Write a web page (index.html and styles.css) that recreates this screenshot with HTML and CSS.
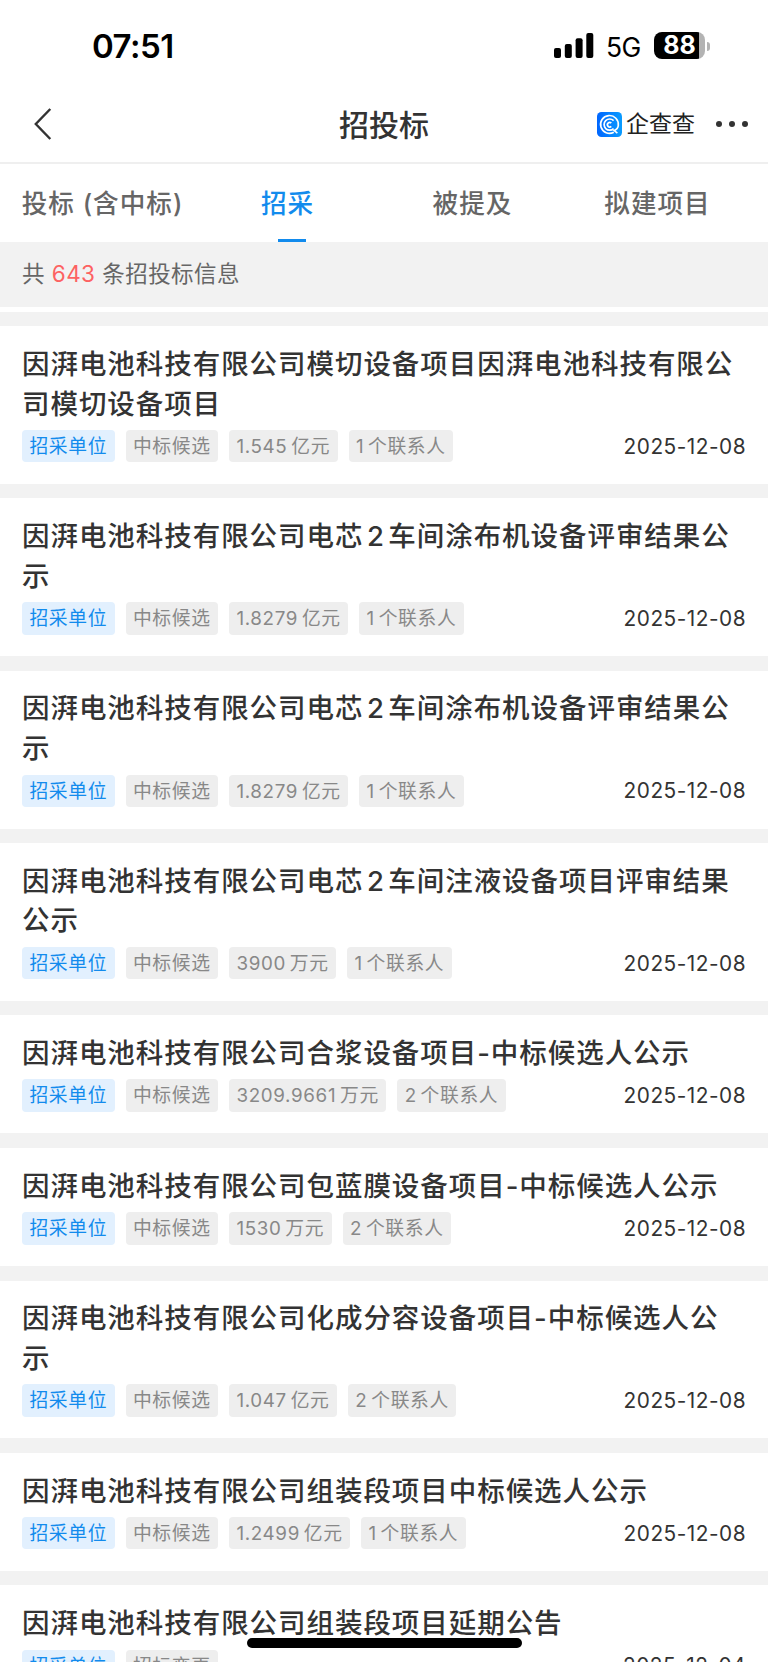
FILE: index.html
```
<!DOCTYPE html>
<html lang="zh-CN">
<head>
    <meta charset="UTF-8">
    <meta name="viewport" content="width=device-width, initial-scale=1.0">
    <title>招投标</title>
    <link rel="stylesheet" href="styles.css">
</head>
<body>
    <div class="page">
        <div class="status-bar">
            <span class="time">07:51</span>
            <div class="status-right">
                <svg class="signal" viewBox="0 0 40 26" width="40" height="26">
                    <rect x="0" y="15" width="7" height="10" rx="2"/>
                    <rect x="10.8" y="11" width="7" height="14" rx="2"/>
                    <rect x="21.6" y="5.3" width="7" height="19.7" rx="2"/>
                    <rect x="32.3" y="0" width="7" height="25" rx="2"/>
                </svg>
                <span class="network">5G</span>
                <div class="battery"><span class="battery-level">88</span></div>
                <span class="battery-cap"></span>
            </div>
        </div>

        <div class="nav-bar">
            <svg class="back" viewBox="0 0 18 32" width="18" height="32">
                <path d="M16.3 1 L1.8 16 L16.3 31"/>
            </svg>
            <h1>招投标</h1>
            <div class="nav-right">
                <svg class="logo" viewBox="0 0 25 25" width="25" height="25">
                    <defs>
                        <linearGradient id="logoBg" x1="0" y1="0" x2="1" y2="0">
                            <stop offset="0" stop-color="#0066ff"/>
                            <stop offset="1" stop-color="#0a9cff"/>
                        </linearGradient>
                    </defs>
                    <rect width="25" height="25" rx="4.5" fill="url(#logoBg)"/>
                    <path d="M16.8 20.2 A8.9 8.9 0 1 1 21.3 13.5 Q21 17 17.2 18.6 L20.4 21.2"/>
                    <path d="M16.6 8.6 A5.6 5.6 0 1 0 16.6 16.6"/>
                    <path d="M14.3 11 A2.3 2.3 0 1 0 14.3 14.4"/>
                </svg>
                <span class="brand">企查查</span>
                <span class="more"><i></i><i></i><i></i></span>
            </div>
        </div>

        <div class="tabs">
            <div class="tab">投标 (含中标)</div>
            <div class="tab active">招采</div>
            <div class="tab">被提及</div>
            <div class="tab">拟建项目</div>
        </div>

        <div class="summary">共 <span class="count">643</span> 条招投标信息</div>

        <div class="list">
            <div class="card">
                <h2>因湃电池科技有限公司模切设备项目因湃电池科技有限公司模切设备项目</h2>
                <div class="meta">
                    <span class="tag blue">招采单位</span>
                    <span class="tag">中标候选</span>
                    <span class="tag"><b>1.545</b>亿元</span>
                    <span class="tag"><b>1</b>个联系人</span>
                    <span class="date">2025-12-08</span>
                </div>
            </div>
            <div class="card">
                <h2>因湃电池科技有限公司电芯<span class="num">2</span>车间涂布机设备评审结果公示</h2>
                <div class="meta">
                    <span class="tag blue">招采单位</span>
                    <span class="tag">中标候选</span>
                    <span class="tag"><b>1.8279</b>亿元</span>
                    <span class="tag"><b>1</b>个联系人</span>
                    <span class="date">2025-12-08</span>
                </div>
            </div>
            <div class="card">
                <h2>因湃电池科技有限公司电芯<span class="num">2</span>车间涂布机设备评审结果公示</h2>
                <div class="meta">
                    <span class="tag blue">招采单位</span>
                    <span class="tag">中标候选</span>
                    <span class="tag"><b>1.8279</b>亿元</span>
                    <span class="tag"><b>1</b>个联系人</span>
                    <span class="date">2025-12-08</span>
                </div>
            </div>
            <div class="card">
                <h2>因湃电池科技有限公司电芯<span class="num">2</span>车间注液设备项目评审结果公示</h2>
                <div class="meta">
                    <span class="tag blue">招采单位</span>
                    <span class="tag">中标候选</span>
                    <span class="tag"><b>3900</b>万元</span>
                    <span class="tag"><b>1</b>个联系人</span>
                    <span class="date">2025-12-08</span>
                </div>
            </div>
            <div class="card">
                <h2>因湃电池科技有限公司合浆设备项目-中标候选人公示</h2>
                <div class="meta">
                    <span class="tag blue">招采单位</span>
                    <span class="tag">中标候选</span>
                    <span class="tag"><b>3209.9661</b>万元</span>
                    <span class="tag"><b>2</b>个联系人</span>
                    <span class="date">2025-12-08</span>
                </div>
            </div>
            <div class="card">
                <h2>因湃电池科技有限公司包蓝膜设备项目-中标候选人公示</h2>
                <div class="meta">
                    <span class="tag blue">招采单位</span>
                    <span class="tag">中标候选</span>
                    <span class="tag"><b>1530</b>万元</span>
                    <span class="tag"><b>2</b>个联系人</span>
                    <span class="date">2025-12-08</span>
                </div>
            </div>
            <div class="card">
                <h2>因湃电池科技有限公司化成分容设备项目-中标候选人公示</h2>
                <div class="meta">
                    <span class="tag blue">招采单位</span>
                    <span class="tag">中标候选</span>
                    <span class="tag"><b>1.047</b>亿元</span>
                    <span class="tag"><b>2</b>个联系人</span>
                    <span class="date">2025-12-08</span>
                </div>
            </div>
            <div class="card">
                <h2>因湃电池科技有限公司组装段项目中标候选人公示</h2>
                <div class="meta">
                    <span class="tag blue">招采单位</span>
                    <span class="tag">中标候选</span>
                    <span class="tag"><b>1.2499</b>亿元</span>
                    <span class="tag"><b>1</b>个联系人</span>
                    <span class="date">2025-12-08</span>
                </div>
            </div>
            <div class="card">
                <h2>因湃电池科技有限公司组装段项目延期公告</h2>
                <div class="meta">
                    <span class="tag blue">招采单位</span>
                    <span class="tag">招标变更</span>
                    <span class="date">2025-12-04</span>
                </div>
            </div>
        </div>

        <!-- faint account watermark -->
        <span class="watermark wm-left">ee80cdv</span>
        <span class="watermark wm-right">ee80cdv</span>
        <span class="watermark wm-list">ee80cdv</span>

        <div class="home-indicator"></div>
    </div>
</body>
</html>
```
FILE: styles.css
```
* {
    box-sizing: border-box;
}
body {
    margin: 0;
    font-family: Inter, "Noto Sans CJK SC", sans-serif;
    background-color: #fff;
    color: #333;
}
.page {
    position: relative;
    width: 768px;
    height: 1662px;
    overflow: hidden;
}
.status-bar {
    display: flex;
    justify-content: space-between;
    align-items: center;
    height: 92px;
    padding: 0 58px 0 92px;
    color: #000;
}
.time {
    font-size: 33px;
    font-weight: 600;
    letter-spacing: -0.5px;
}
.status-right {
    display: flex;
    align-items: center;
}
.network {
    width: 36px;
    margin: 2px 12px 0 12px;
    font-size: 26.5px;
    letter-spacing: -0.5px;
}
.battery {
    width: 51px;
    height: 27px;
    margin-top: -1px;
    border-radius: 8px;
    background: linear-gradient(to right, #000 45px, #b3b3b3 45px);
}
.battery-level {
    display: block;
    width: 51px;
    line-height: 27px;
    text-align: center;
    font-size: 25px;
    font-weight: 700;
    color: #fff;
}
.battery-cap {
    width: 3px;
    height: 9px;
    margin-left: 2px;
    border-radius: 0 4px 4px 0;
    background-color: #b3b3b3;
}
.nav-bar {
    display: grid;
    grid-template-columns: 1fr auto 1fr;
    align-items: center;
    height: 72px;
    padding: 0 20px 6px;
    border-bottom: 2px solid #efefef;
}
.back {
    margin-left: 14px;
    fill: none;
    stroke: #333;
    stroke-width: 2.4;
}
.nav-bar h1 {
    margin: 2px 0 0;
    font-size: 30px;
    font-weight: 500;
    line-height: 40px;
}
.nav-right {
    display: flex;
    align-items: center;
    justify-content: flex-end;
}
.logo path {
    fill: none;
    stroke: #fff;
    stroke-width: 1.7;
}
.brand {
    margin: 0 21px 0 4px;
    font-size: 23px;
    line-height: 30px;
    color: #222;
}
.more {
    display: flex;
    gap: 7px;
}
.more i {
    width: 6px;
    height: 6px;
    border-radius: 50%;
    background-color: #333;
}
.tabs {
    display: flex;
    height: 78px;
    padding: 0 18px 0 10px;
}
.tab {
    position: relative;
    flex: 1 1 0;
    height: 78px;
    line-height: 79px;
    text-align: center;
    font-size: 25.6px;
    font-weight: 500;
    letter-spacing: 1px;
    color: #666;
    white-space: nowrap;
}
.tab.active {
    color: #128bed;
}
.tab.active::after {
    content: "";
    position: absolute;
    left: 50%;
    bottom: 0;
    width: 28px;
    height: 3px;
    margin-left: -10px;
    background-color: #128bed;
}
.summary {
    height: 65px;
    padding-left: 22px;
    line-height: 64px;
    font-size: 22.5px;
    letter-spacing: 0.45px;
    color: #666;
    background-color: #f2f2f2;
}
.count {
    color: #fd6262;
}
.list {
    display: flex;
    flex-direction: column;
    gap: 14.4px;
    margin-top: 5px;
    padding-top: 14.2px;
    background-color: #f2f2f2;
}
.card {
    padding: 18.8px 22px 21.6px;
    background-color: #fff;
}
.card h2 {
    margin: 0 0 5.9px;
    font-size: 27.5px;
    font-weight: 500;
    line-height: 39.6px;
    letter-spacing: 0.95px;
}
.num {
    margin: 0 3.5px;
}
.meta {
    display: flex;
    align-items: center;
    gap: 11px;
    height: 32.4px;
}
.tag {
    height: 32.4px;
    padding: 1px 7.4px 0;
    border-radius: 4px;
    line-height: 32.4px;
    font-size: 18.8px;
    letter-spacing: 0.65px;
    color: #888;
    background-color: #eee;
    white-space: nowrap;
}
.tag b {
    margin-right: 3.8px;
    font-weight: 400;
}
.tag.blue {
    color: #128bed;
    background-color: #e2f0fe;
}
.date {
    margin-left: auto;
    font-size: 20.8px;
    letter-spacing: 0.5px;
}
.watermark {
    position: absolute;
    font-size: 24px;
    letter-spacing: 8.5px;
    line-height: 30px;
    color: rgba(0, 0, 0, 0.012);
    pointer-events: none;
}
.wm-left {
    left: 8px;
    top: 138px;
}
.wm-right {
    left: 610px;
    top: 78px;
}
.wm-list {
    left: 610px;
    top: 320px;
}
.home-indicator {
    position: absolute;
    left: 247px;
    bottom: 14px;
    width: 275px;
    height: 10px;
    border-radius: 5px;
    background-color: #000;
}
```
